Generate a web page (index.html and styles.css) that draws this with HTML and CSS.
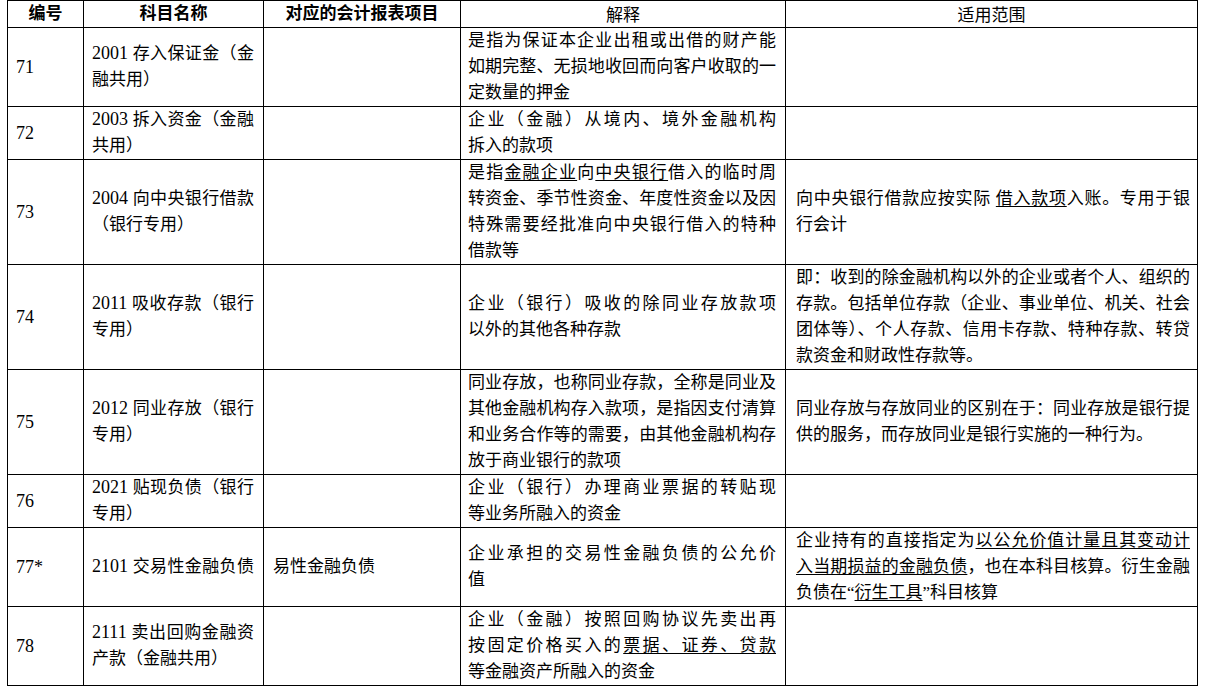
FILE: index.html
```html
<!DOCTYPE html>
<html lang="zh-CN">
<head>
<meta charset="utf-8">
<title>会计科目</title>
<link rel="stylesheet" href="styles.css">
</head>
<body>
<table class="tbl">
  <colgroup>
    <col class="c1"><col class="c2"><col class="c3"><col class="c4"><col class="c5">
  </colgroup>
  <thead>
    <tr>
      <th class="hb">编号</th>
      <th class="hb">科目名称</th>
      <th class="hb">对应的会计报表项目</th>
      <th class="hn">解释</th>
      <th class="hn">适用范围</th>
    </tr>
  </thead>
  <tbody>
    <tr>
      <td class="num">71</td>
      <td class="name"><span class="ln"><span class="code">2001</span> 存入保证金（金</span><span class="ln last">融共用）</span></td>
      <td class="item"></td>
      <td class="exp"><span class="ln">是指为保证本企业出租或出借的财产能</span><span class="ln">如期完整、无损地收回而向客户收取的一</span><span class="ln last">定数量的押金</span></td>
      <td class="scope"></td>
    </tr>
    <tr>
      <td class="num">72</td>
      <td class="name"><span class="ln"><span class="code">2003</span> 拆入资金（金融</span><span class="ln last">共用）</span></td>
      <td class="item"></td>
      <td class="exp"><span class="ln">企业（金融）从境内、境外金融机构</span><span class="ln last">拆入的款项</span></td>
      <td class="scope"></td>
    </tr>
    <tr>
      <td class="num">73</td>
      <td class="name"><span class="ln"><span class="code">2004</span> 向中央银行借款</span><span class="ln last">（银行专用）</span></td>
      <td class="item"></td>
      <td class="exp"><span class="ln">是指<u>金融企业</u>向<u>中央银行</u>借入的临时周</span><span class="ln">转资金、季节性资金、年度性资金以及因</span><span class="ln">特殊需要经批准向中央银行借入的特种</span><span class="ln last">借款等</span></td>
      <td class="scope"><span class="ln">向中央银行借款应按实际 <u>借入款项</u>入账。专用于银</span><span class="ln last">行会计</span></td>
    </tr>
    <tr>
      <td class="num">74</td>
      <td class="name"><span class="ln"><span class="code">2011</span> 吸收存款（银行</span><span class="ln last">专用）</span></td>
      <td class="item"></td>
      <td class="exp"><span class="ln">企业（银行）吸收的除同业存放款项</span><span class="ln last">以外的其他各种存款</span></td>
      <td class="scope"><span class="ln">即：收到的除金融机构以外的企业或者个人、组织的</span><span class="ln">存款。包括单位存款（企业、事业单位、机关、社会</span><span class="ln">团体等）、个人存款、信用卡存款、特种存款、转贷</span><span class="ln last">款资金和财政性存款等。</span></td>
    </tr>
    <tr>
      <td class="num">75</td>
      <td class="name"><span class="ln"><span class="code">2012</span> 同业存放（银行</span><span class="ln last">专用）</span></td>
      <td class="item"></td>
      <td class="exp"><span class="ln">同业存放，也称同业存款，全称是同业及</span><span class="ln">其他金融机构存入款项，是指因支付清算</span><span class="ln">和业务合作等的需要，由其他金融机构存</span><span class="ln last">放于商业银行的款项</span></td>
      <td class="scope"><span class="ln">同业存放与存放同业的区别在于：同业存放是银行提</span><span class="ln last">供的服务，而存放同业是银行实施的一种行为。</span></td>
    </tr>
    <tr>
      <td class="num">76</td>
      <td class="name"><span class="ln"><span class="code">2021</span> 贴现负债（银行</span><span class="ln last">专用）</span></td>
      <td class="item"></td>
      <td class="exp"><span class="ln">企业（银行）办理商业票据的转贴现</span><span class="ln last">等业务所融入的资金</span></td>
      <td class="scope"></td>
    </tr>
    <tr>
      <td class="num">77*</td>
      <td class="name"><span class="ln"><span class="code">2101</span> 交易性金融负债</span></td>
      <td class="item">易性金融负债</td>
      <td class="exp"><span class="ln">企业承担的交易性金融负债的公允价</span><span class="ln last">值</span></td>
      <td class="scope"><span class="ln">企业持有的直接指定为<u>以公允价值计量且其变动计</u></span><span class="ln"><u>入当期损益的金融负债</u>，也在本科目核算。衍生金融</span><span class="ln last">负债在“<u>衍生工具</u>”科目核算</span></td>
    </tr>
    <tr>
      <td class="num">78</td>
      <td class="name"><span class="ln"><span class="code">2111</span> 卖出回购金融资</span><span class="ln last">产款（金融共用）</span></td>
      <td class="item"></td>
      <td class="exp"><span class="ln">企业（金融）按照回购协议先卖出再</span><span class="ln">按固定价格买入的<u>票据、证券、贷款</u></span><span class="ln last">等金融资产所融入的资金</span></td>
      <td class="scope"></td>
    </tr>
  </tbody>
</table>
</body>
</html>
```

FILE: styles.css
```css
html, body {
  margin: 0;
  padding: 0;
  background: #ffffff;
}

body {
  padding-left: 7px;
  font-family: "Liberation Serif", "Noto Sans CJK SC", serif;
  font-size: 17px;
  color: #000000;
}

.tbl {
  border-collapse: collapse;
  table-layout: fixed;
  width: 1190px;
}

.c1 { width: 76px; }
.c2 { width: 180px; }
.c3 { width: 197px; }
.c4 { width: 325px; }
.c5 { width: 412px; }

.tbl th,
.tbl td {
  border: 1px solid #000000;
  line-height: 26px;
  height: 26px;
  padding: 0;
  vertical-align: middle;
  text-align: left;
}

.tbl th {
  text-align: center;
  font-size: 17px;
}

.tbl .hb {
  font-weight: bold;
  font-family: "Liberation Serif", "Noto Sans CJK SC", serif;
}

.tbl .hn {
  font-weight: normal;
  font-family: "Noto Sans CJK SC", sans-serif;
}

.tbl .num {
  padding-left: 8px;
  font-size: 18px;
}

.code {
  font-size: 18px;
  line-height: 0;
}

.tbl .name {
  padding-left: 8px;
  padding-right: 9px;
}

.tbl .item {
  padding-left: 9px;
}

.tbl .exp {
  padding-left: 7px;
  padding-right: 9px;
}

.tbl .scope {
  padding-left: 10px;
  padding-right: 7px;
}

.ln {
  display: block;
  height: 26px;
  overflow: visible;
  text-align: justify;
  text-align-last: justify;
}

.ln.last {
  text-align-last: left;
}

u {
  text-decoration: underline;
  text-underline-offset: 2px;
}
```
